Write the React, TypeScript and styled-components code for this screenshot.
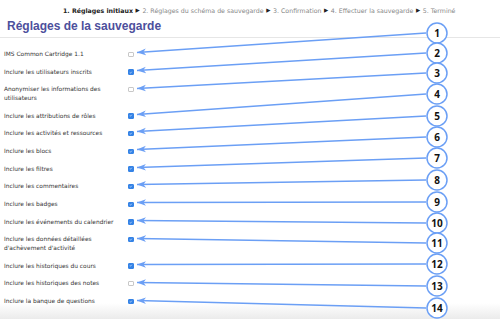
import React from "react";
import styled, { createGlobalStyle } from "styled-components";

const GlobalStyle = createGlobalStyle`
  html, body {
    margin: 0;
    padding: 0;
    background: #fff;
  }
`;

interface Option {
  label: string[];
  checked: boolean;
}

const OPTIONS: Option[] = [
  { label: ["IMS Common Cartridge 1.1"], checked: false },
  { label: ["Inclure les utilisateurs inscrits"], checked: true },
  { label: ["Anonymiser les informations des", "utilisateurs"], checked: false },
  { label: ["Inclure les attributions de rôles"], checked: true },
  { label: ["Inclure les activités et ressources"], checked: true },
  { label: ["Inclure les blocs"], checked: true },
  { label: ["Inclure les filtres"], checked: true },
  { label: ["Inclure les commentaires"], checked: true },
  { label: ["Inclure les badges"], checked: true },
  { label: ["Inclure les événements du calendrier"], checked: true },
  { label: ["Inclure les données détaillées", "d'achèvement d'activité"], checked: true },
  { label: ["Inclure les historiques du cours"], checked: true },
  { label: ["Inclure les historiques des notes"], checked: false },
  { label: ["Inclure la banque de questions"], checked: true },
];

const STEPS = [
  "1. Réglages initiaux",
  "2. Réglages du schéma de sauvegarde",
  "3. Confirmation",
  "4. Effectuer la sauvegarde",
  "5. Terminé",
];

// where each arrow lands (checkbox) and where its numbered callout sits
const TIPS = [52, 70, 88, 114, 131, 149, 167, 184, 202, 220, 238, 264, 282, 300];
const BUBBLES = [33, 53, 73, 94, 116, 137, 158, 180, 202, 223, 243, 264, 286, 308];

const App = () => {
  return (
    <Page>
      <GlobalStyle />
      <Steps>
        {STEPS.map((step, i) => (
          <React.Fragment key={step}>
            <Step current={i === 0}>{step}</Step>
            {i < STEPS.length - 1 && <Sep>▶</Sep>}
          </React.Fragment>
        ))}
      </Steps>
      <Title>Réglages de la sauvegarde</Title>
      <List>
        {OPTIONS.map((opt) => (
          <Row key={opt.label.join(" ")}>
            <Label>
              {opt.label.map((line) => (
                <div key={line}>{line}</div>
              ))}
            </Label>
            <Box checked={opt.checked}>
              {opt.checked && (
                <svg width="5" height="5" viewBox="0 0 6 6">
                  <path d="M1.3 3.1 L2.5 4.2 L4.7 1.7" fill="none" stroke="#fff" strokeWidth="1" />
                </svg>
              )}
            </Box>
          </Row>
        ))}
      </List>
      <Callouts width="500" height="319" viewBox="0 0 500 319">
        <defs>
          <marker id="head" markerWidth="10" markerHeight="8" refX="9" refY="4" orient="auto" markerUnits="userSpaceOnUse">
            <path d="M9 4 L0 0.7 L2.6 4 L0 7.3 Z" fill="#6b9ff5" />
          </marker>
        </defs>
        {TIPS.map((tip, i) => (
          <line
            key={i}
            x1={426}
            y1={BUBBLES[i]}
            x2={137}
            y2={tip + 0.5}
            stroke="#6b9ff5"
            strokeWidth="1.3"
            markerEnd="url(#head)"
          />
        ))}
        {BUBBLES.map((cy, i) => (
          <g key={i}>
            <circle cx={437} cy={cy} r={10} fill="#fff" stroke="#6b9ff5" strokeWidth="1.5" />
            <Num x={437} y={cy + 3.6} textAnchor="middle">
              {i + 1}
            </Num>
          </g>
        ))}
      </Callouts>
    </Page>
  );
};

export default App;

const Page = styled.div`
  position: relative;
  width: 500px;
  height: 319px;
  overflow: hidden;
  background: linear-gradient(to bottom, #fff 0, #fff 95%, #ebebeb 100%);
  font-family: "DejaVu Sans", Verdana, sans-serif;
`;

const Steps = styled.div`
  display: flex;
  align-items: center;
  gap: 2.6px;
  padding: 5px 0 0 63px;
  height: 10px;
  font-size: 6.25px;
  color: #888;
  white-space: nowrap;
`;

const Step = styled.span<{ current: boolean }>`
  color: ${(p) => (p.current ? "#222" : "#888")};
  font-weight: ${(p) => (p.current ? "bold" : "normal")};
`;

const Sep = styled.span`
  color: #222;
  font-size: 5.5px;
`;

const Title = styled.h2`
  margin: 4px 0 0 0;
  padding: 0 0 4px 7px;
  font-family: "Liberation Sans", Arial, sans-serif;
  font-size: 12px;
  line-height: 14px;
  font-weight: bold;
  color: #4d4f9c;
  border-bottom: 1px solid #e6e6e6;
`;

const List = styled.div`
  display: flex;
  flex-direction: column;
  padding: 7.5px 0 0 4px;
`;

const Row = styled.div`
  display: grid;
  grid-template-columns: 124px 8px;
  align-items: start;
  padding: 4.6px 0;
`;

const Label = styled.div`
  font-size: 5.9px;
  line-height: 8.5px;
  color: #333;
`;

const Box = styled.div<{ checked: boolean }>`
  box-sizing: border-box;
  width: 5.5px;
  height: 5.5px;
  margin-top: 1.5px;
  border-radius: 1px;
  display: flex;
  align-items: center;
  justify-content: center;
  background: ${(p) => (p.checked ? "#3583e6" : "#fff")};
  border: 0.6px solid ${(p) => (p.checked ? "#3583e6" : "#c8c8c8")};
`;

const Callouts = styled.svg`
  position: absolute;
  left: 0;
  top: 0;
  pointer-events: none;
`;

const Num = styled.text`
  font-family: "Open Sans", "DejaVu Sans", sans-serif;
  font-weight: bold;
  font-size: 10px;
  fill: #111;
`;
